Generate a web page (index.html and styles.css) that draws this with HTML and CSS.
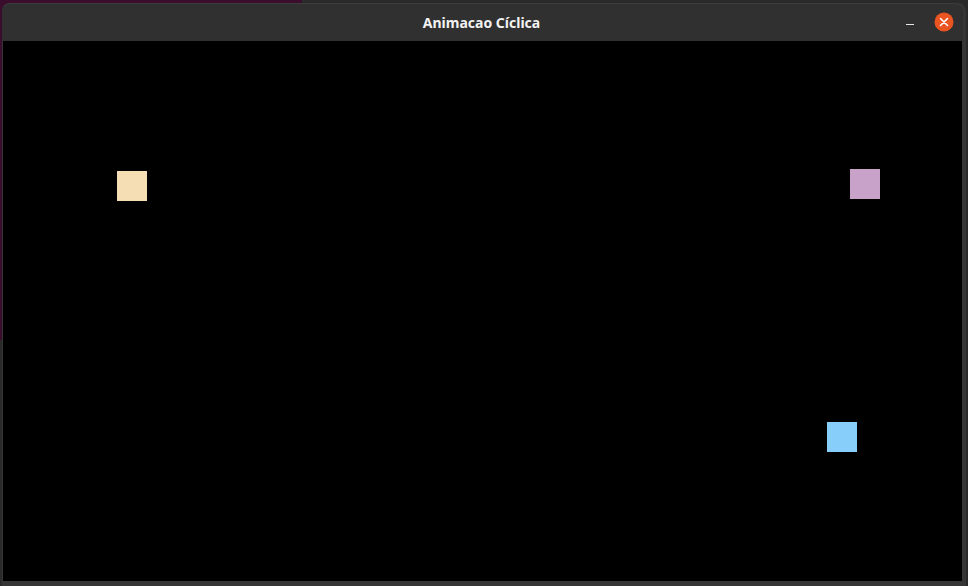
FILE: index.html
```html
<!DOCTYPE html>
<html>
<head>
<meta charset="utf-8">
<link rel="stylesheet" href="styles.css">
</head>
<body>
<div class="desktop">
  <div class="behind"></div>
  <div class="window">
    <div class="titlebar">
      <span class="title">Animacao Cíclica</span>
      <div class="controls">
        <span class="minimize"></span>
        <span class="close">
          <svg width="20" height="20" viewBox="0 0 20 20">
            <circle cx="10" cy="10" r="9.5" fill="#e95420"/>
            <path d="M6.5 6.5 L13.5 13.5 M13.5 6.5 L6.5 13.5" stroke="#fff" stroke-width="1.6" stroke-linecap="round"/>
          </svg>
        </span>
      </div>
    </div>
    <div class="canvas">
      <div class="sq wheat"></div>
      <div class="sq lilac"></div>
      <div class="sq sky"></div>
    </div>
  </div>
</div>
</body>
</html>
```
FILE: styles.css
```css
html, body {
  margin: 0;
  padding: 0;
  width: 968px;
  height: 586px;
  overflow: hidden;
  background: #2a2a2a;
}
.desktop {
  position: relative;
  width: 968px;
  height: 586px;
}
.behind {
  position: absolute;
  left: 0;
  top: 0;
  width: 302px;
  height: 340px;
  background: #3a0d2c;
}
.window {
  position: absolute;
  left: 2px;
  top: 3px;
  width: 964px;
  height: 583px;
  display: flex;
  flex-direction: column;
  background: #363636;
  border-radius: 8px 8px 0 0;
  overflow: hidden;
}
.titlebar {
  height: 38px;
  flex: none;
  background: #303030;
  display: flex;
  align-items: center;
  justify-content: center;
  position: relative;
  border-top: 1px solid #3c3c3c;
  box-sizing: border-box;
  margin-right: 3px;
  border-radius: 8px 8px 0 0;
}
.title {
  font-family: "Noto Sans", "Open Sans", sans-serif;
  font-weight: 700;
  font-size: 14px;
  color: #f2f2f2;
  margin-left: -2px;
  margin-top: 0;
}
.controls {
  position: absolute;
  right: 9px;
  top: 8px;
  display: flex;
  align-items: center;
  gap: 20px;
}
.minimize {
  display: block;
  width: 8px;
  height: 1.5px;
  background: #e8e8e8;
  margin-top: 5px;
}
.close {
  display: block;
  width: 20px;
  height: 20px;
}
.close svg { display: block; }
.canvas {
  position: relative;
  background: #000;
  margin-left: 1px;
  width: 959px;
  height: 540px;
  flex: none;
}
.sq {
  position: absolute;
  width: 30px;
  height: 30px;
}
.wheat { left: 114px; top: 130px; background: #f5deb3; }
.lilac { left: 847px; top: 128px; background: #c8a2c8; }
.sky { left: 824px; top: 381px; background: #87cefa; }
```
